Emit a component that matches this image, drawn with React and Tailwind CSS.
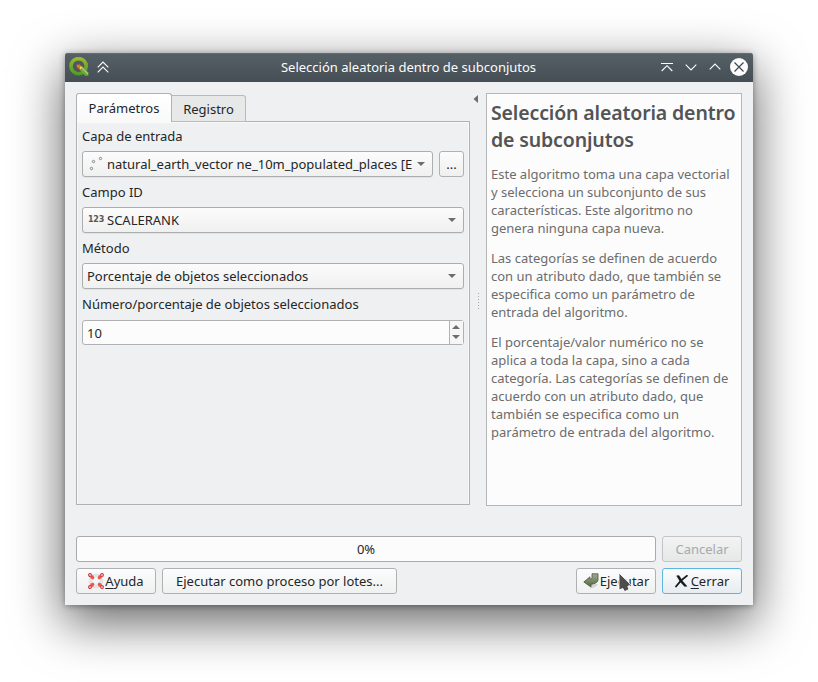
import React from "react";

const field =
  "flex h-[26px] items-center rounded-[3px] border border-[#acadae] bg-linear-to-b from-[#fcfcfc] to-[#eff0f0] shadow-[0_1px_0_#e2e3e4]";
const button =
  "flex h-[26px] items-center justify-center rounded-[3px] border border-[#b0b1b2] bg-linear-to-b from-[#fcfcfc] to-[#eff0f0] whitespace-pre";

function Arrow({ up = false }) {
  return (
    <svg width="8" height="4" viewBox="0 0 8 4" className="shrink-0">
      <path d={up ? "M0 4L4 0L8 4Z" : "M0 0H8L4 4Z"} fill="#6b6d6f" />
    </svg>
  );
}

function QgisLogo() {
  return (
    <svg width="20" height="20" viewBox="0 0 20 20" className="shrink-0">
      <defs>
        <linearGradient id="ring" x1="0" y1="0" x2="0" y2="1">
          <stop offset="0" stopColor="#96b92b" />
          <stop offset="1" stopColor="#559a2d" />
        </linearGradient>
      </defs>
      <circle cx="9.6" cy="9.2" r="7.6" fill="none" stroke="url(#ring)" strokeWidth="3.6" />
      <path d="M10.5 10L13 9L19.4 15.5V18.8H16L10.5 12.5Z" fill="#6da83a" />
      <path d="M12.5 10.5L19 17" stroke="#a9c97c" strokeWidth="1.2" />
      <path d="M7.6 7.8L10.6 7.4L13.2 9.8L10.8 12.4L8 10.3Z" fill="#ee7913" />
      <path d="M11 9.8L13.4 10L11.2 12.6Z" fill="#f5e05c" />
    </svg>
  );
}

function TitleBar() {
  const line = { fill: "none", stroke: "#fcfcfc", strokeWidth: 1.1 };
  return (
    <div className="relative flex h-[29px] items-center rounded-t-[3px] bg-linear-to-b from-[#566067] to-[#454e55] pb-px pl-1 pr-[5px] shadow-[inset_0_1px_0_#646d73]">
      <QgisLogo />
      <svg width="12" height="12" viewBox="0 0 12 12" className="ml-2">
        <path d="M0.7 6.3L6 1L11.3 6.3M0.7 11.3L6 6L11.3 11.3" {...line} />
      </svg>
      <div className="flex-1 pl-[47px] text-center text-[#fcfcfc]">Selección aleatoria dentro de subconjutos</div>
      <svg width="12" height="10" viewBox="0 0 12 10" className="mr-3">
        <path d="M0 1.5H12M0.7 9L6 3.7L11.3 9" {...line} />
      </svg>
      <svg width="12" height="10" viewBox="0 0 12 10" className="mr-3">
        <path d="M0.7 2.7L6 8L11.3 2.7" {...line} />
      </svg>
      <svg width="12" height="10" viewBox="0 0 12 10" className="mr-[9px]">
        <path d="M0.7 7.3L6 2L11.3 7.3" {...line} />
      </svg>
      <svg width="18" height="18" viewBox="0 0 18 18">
        <circle cx="9" cy="9" r="9" fill="#fcfcfc" />
        <path d="M4.5 4.5L13.5 13.5M13.5 4.5L4.5 13.5" stroke="#41494f" strokeWidth="1.2" />
      </svg>
    </div>
  );
}

function Label({ children }) {
  return <div className="mb-1.5 h-[18px]">{children}</div>;
}

function Parameters() {
  return (
    <div className="flex w-[394px] flex-col">
      <div className="relative z-10 flex h-[29px] items-end">
        <div className="flex h-[29px] w-24 items-center justify-center rounded-t-[3px] border border-b-0 border-[#b0b1b2] bg-linear-to-b from-white to-[#f9f9fa]">
          Parámetros
        </div>
        <div className="flex h-[27px] w-[74px] items-center justify-center rounded-tr-[3px] border border-l-0 border-[#b9babb] bg-[#e7e8e8]">
          Registro
        </div>
      </div>
      <div className="-mt-px h-[384px] border border-[#b0b1b2] px-[5px] pt-[5px] shadow-[inset_1px_1px_0_#f9f9fa,inset_-1px_0_0_#f9f9fa]">
        <Label>Capa de entrada</Label>
        <div className="mb-1.5 flex gap-1.5">
          <div className={`${field} w-[351px] pl-1.5 pr-[7px]`}>
            <svg width="18" height="16" viewBox="0 0 18 16" className="shrink-0" fill="none" stroke="#858789">
              <circle cx="2.5" cy="12.5" r="1.2" />
              <circle cx="4.5" cy="5.5" r="1.2" />
              <circle cx="11.5" cy="2.5" r="1.2" />
            </svg>
            <span className="flex-1 whitespace-nowrap">natural_earth_vector ne_10m_populated_places [E</span>
            <Arrow />
          </div>
          <div className={`${button} h-[25px] w-[25px]`}>...</div>
        </div>
        <Label>Campo ID</Label>
        <div className={`${field} mb-1.5 pl-[5px] pr-[7px]`}>
          <span className="w-[19px] font-['DejaVu_Sans',sans-serif] text-[8px] font-bold leading-[18px] tracking-[-0.2px] text-[#56585a]">123</span>
          <span className="flex-1">SCALERANK</span>
          <Arrow />
        </div>
        <Label>Método</Label>
        <div className={`${field} mb-1.5 pl-1 pr-[7px]`}>
          <span className="flex-1">Porcentaje de objetos seleccionados</span>
          <Arrow />
        </div>
        <Label>Número/porcentaje de objetos seleccionados</Label>
        <div className="mt-[7px] flex h-[25px] rounded-[3px] border border-[#b0b1b2] bg-[#fcfcfc]">
          <div className="flex flex-1 items-center pl-1">10</div>
          <div className="flex w-[14px] flex-col items-center gap-1.5 border-l border-[#b0b1b2] bg-[#f6f6f6] pr-px pt-1">
            <Arrow up />
            <Arrow />
          </div>
        </div>
      </div>
    </div>
  );
}

function Splitter() {
  return (
    <div className="flex w-4 flex-col items-center">
      <svg width="5" height="8" viewBox="0 0 5 8" className="mt-0.5 mr-[5px]">
        <path d="M5 0V8L0.5 4Z" fill="#6b6d6f" />
      </svg>
      <div className="mt-[190px] flex flex-col gap-0.5">
        <i className="size-px bg-[#a5a6a8]" />
        <i className="size-px bg-[#a5a6a8]" />
        <i className="size-px bg-[#a5a6a8]" />
        <i className="size-px bg-[#a5a6a8]" />
        <i className="size-px bg-[#a5a6a8]" />
        <i className="size-px bg-[#a5a6a8]" />
      </div>
    </div>
  );
}

function Help() {
  return (
    <div className="h-[413px] w-64 border border-[#b5b6b8] bg-[#fcfcfc] pl-1 text-[#6b6c6e] whitespace-nowrap">
      <h1 className="mt-[5px] mb-[12px] text-[19.5px] font-semibold leading-[27px] tracking-[-0.14px] text-[#525456]">
        Selección aleatoria dentro
        <br />
        de subconjutos
      </h1>
      <p className="mb-3">
        Este algoritmo toma una capa vectorial
        <br />y selecciona un subconjunto de sus
        <br />
        características. Este algoritmo no
        <br />
        genera ninguna capa nueva.
      </p>
      <p className="mb-3">
        Las categorías se definen de acuerdo
        <br />
        con un atributo dado, que también se
        <br />
        especifica como un parámetro de
        <br />
        entrada del algoritmo.
      </p>
      <p>
        El porcentaje/valor numérico no se
        <br />
        aplica a toda la capa, sino a cada
        <br />
        categoría. Las categorías se definen de
        <br />
        acuerdo con un atributo dado, que
        <br />
        también se especifica como un
        <br />
        parámetro de entrada del algoritmo.
      </p>
    </div>
  );
}

function HelpIcon() {
  return (
    <svg width="16" height="16" viewBox="0 0 16 16" className="mr-px shrink-0">
      <circle cx="8" cy="8" r="5.6" fill="none" stroke="#e3e4e5" strokeWidth="3.6" />
      <g fill="#ef5350">
        <path d="M5 2L6.5 5L5 6.5L2 5L3 3Z" />
        <path d="M11 2L9.5 5L11 6.5L14 5L13 3Z" />
        <path d="M5 14L6.5 11L5 9.5L2 11L3 13Z" />
        <path d="M11 14L9.5 11L11 9.5L14 11L13 13Z" />
      </g>
      <g fill="none" stroke="#cf3538" strokeWidth="1.1">
        <circle cx="2" cy="2" r="1.4" />
        <circle cx="14" cy="2" r="1.4" />
        <circle cx="2" cy="14" r="1.4" />
        <circle cx="14" cy="14" r="1.4" />
      </g>
    </svg>
  );
}

function RunIcon() {
  return (
    <svg width="16" height="16" viewBox="0 0 16 16" className="mr-px shrink-0">
      <defs>
        <linearGradient id="run" x1="0" y1="0" x2="0" y2="1">
          <stop offset="0" stopColor="#a0ad91" />
          <stop offset="1" stopColor="#53683e" />
        </linearGradient>
      </defs>
      <path d="M7 15.5Q13 15 15 11L8 11Z" fill="#d5d6d4" />
      <path d="M9 0.8H15V7Q14.6 10.5 8 11.3V14L0.8 9L7 3.8V6.4Q9 6.4 9 4.5Z" fill="url(#run)" stroke="#4b5740" strokeWidth="0.8" />
    </svg>
  );
}

function CloseIcon() {
  return (
    <svg width="13" height="13" viewBox="0 0 13 13" className="mr-[3px] shrink-0">
      <path d="M1.6 0.8L4 0.6Q6.5 5.5 12 11.2L9.6 11.4Q4.5 7 1.6 0.8Z" fill="#17191a" stroke="#17191a" strokeWidth="0.4" />
      <path d="M12 0.8Q5.5 5 1 11.6" fill="none" stroke="#17191a" strokeWidth="1.7" strokeLinecap="round" />
    </svg>
  );
}

function Key({ children }) {
  return <span className="underline decoration-1 underline-offset-2">{children}</span>;
}

export default function App() {
  return (
    <div className="h-[682px] w-[818px] overflow-hidden bg-white pl-[65px] pt-[53px] font-['Noto_Sans',sans-serif] text-[13px] leading-[18px] text-[#232629]">
      <div className="h-[552px] w-[688px] rounded-t-[3px] bg-[#eff0f1] shadow-[0_16px_50px_2px_rgba(0,0,0,0.6),0_1px_6px_rgba(0,0,0,0.35)]">
        <TitleBar />
        <div className="px-[11px] pt-[11px]">
          <div className="flex">
            <Parameters />
            <Splitter />
            <Help />
          </div>
          <div className="mt-[30px] flex gap-1.5">
            <div className="flex h-[26px] w-[580px] items-center justify-center rounded-[3px] border border-[#a9aaac] bg-[#fcfcfc]">0%</div>
            <div className="flex h-[26px] w-20 items-center justify-center rounded-[3px] border border-[#c3c4c5] bg-linear-to-b from-[#f3f3f3] to-[#e6e7e7] text-[#a8a9aa]">
              Cancelar
            </div>
          </div>
          <div className="mt-1.5 flex gap-1.5">
            <div className={`${button} w-20`}>
              <HelpIcon />
              <span><Key>A</Key>yuda</span>
            </div>
            <div className={`${button} w-[235px]`}>Ejecutar como proceso por lotes...</div>
            <div className={`${button} relative ml-auto w-20`}>
              <RunIcon />
              Ejecutar
              <svg width="14" height="21" viewBox="0 0 14 21" className="absolute left-[41px] top-[3px]">
                <path d="M1 1L12.6 12.6L9.8 14.4L11 17.4L6.6 19.6L5 16.6L1 17.8Z" fill="#4d4d4d" stroke="#fff" strokeWidth="0.8" />
              </svg>
            </div>
            <div className="flex h-[26px] w-20 items-center justify-center rounded-[3px] border border-[#5eb4e3] bg-linear-to-b from-[#fcfcfc] to-[#e6ecf1]">
              <CloseIcon />
              <span><Key>C</Key>errar</span>
            </div>
          </div>
        </div>
      </div>
    </div>
  );
}
